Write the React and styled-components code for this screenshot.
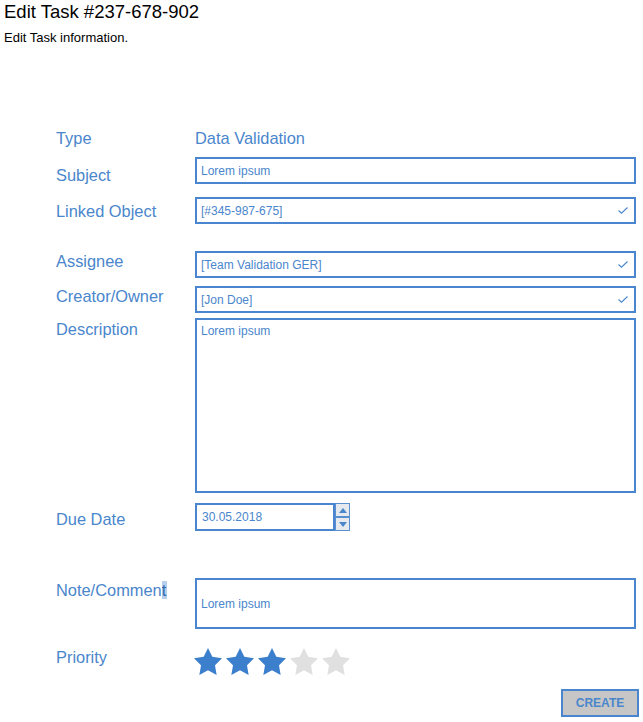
import React from 'react'
import styled, { createGlobalStyle } from 'styled-components'

const GlobalStyle = createGlobalStyle`
    body {
        margin: 0;
        background: #fff;
        font-family: "Liberation Sans", Arial, sans-serif;
    }
    * { box-sizing: border-box; }
`

const BLUE = '#4a86cc'

function Check() {
    return (
        <CheckMark width="10" height="7" viewBox="0 0 10 7">
            <polyline points="0.5,3.5 3.5,6.2 9.5,0.5" fill="none" stroke={BLUE} strokeWidth="1.1" />
        </CheckMark>
    )
}

function Star({ on }) {
    return (
        <svg width="28" height="27" viewBox="2 2 20 19.1" preserveAspectRatio="none">
            <polygon
                points="12,2 15.09,8.26 22,9.27 17,14.14 18.18,21.02 12,17.77 5.82,21.02 7,14.14 2,9.27 8.91,8.26"
                fill={on ? '#3b7fcd' : '#e0e0e0'}
            />
        </svg>
    )
}

function App() {
    const rating = 3

    return (
        <Page>
            <GlobalStyle />
            <Title>Edit Task #237-678-902</Title>
            <Subtitle>Edit Task information.</Subtitle>

            <Fields>
                <Row $gap={84}>
                    <Label>Type</Label>
                    <Value>Data Validation</Value>
                </Row>
                <Row $gap={10}>
                    <Label $offset={9}>Subject</Label>
                    <Input readOnly value="Lorem ipsum" />
                </Row>
                <Row $gap={13}>
                    <Label $offset={5}>Linked Object</Label>
                    <SelectBox>
                        <Input readOnly value="[#345-987-675]" />
                        <Check />
                    </SelectBox>
                </Row>
                <Row $gap={27}>
                    <Label $offset={1}>Assignee</Label>
                    <SelectBox>
                        <Input readOnly value="[Team Validation GER]" />
                        <Check />
                    </SelectBox>
                </Row>
                <Row $gap={8}>
                    <Label $offset={1}>Creator/Owner</Label>
                    <SelectBox>
                        <Input readOnly value="[Jon Doe]" />
                        <Check />
                    </SelectBox>
                </Row>
                <Row $gap={5}>
                    <Label $offset={2}>Description</Label>
                    <TextArea readOnly value="Lorem ipsum" />
                </Row>
                <Row $gap={10}>
                    <Label $offset={7}>Due Date</Label>
                    <DateBox>
                        <DateInput readOnly value="30.05.2018" />
                        <Spinner>
                            <SpinButton><Arrow $up /></SpinButton>
                            <SpinButton><Arrow /></SpinButton>
                        </Spinner>
                    </DateBox>
                </Row>
                <Row $gap={47}>
                    <Label $offset={3}>Note/Commen<Caret>t</Caret></Label>
                    <Input readOnly value="Lorem ipsum" $height={51} />
                </Row>
                <Row $gap={19}>
                    <Label>Priority</Label>
                    <Stars>
                        {[1, 2, 3, 4, 5].map(n => <Star key={n} on={n <= rating} />)}
                    </Stars>
                </Row>
            </Fields>

            <Footer>
                <CreateButton>CREATE</CreateButton>
            </Footer>
        </Page>
    )
}

export default App

const Page = styled.div`
    padding: 1px 4px 0 4px;
    width: 643px;
`

const Title = styled.h1`
    margin: 0;
    font-size: 18.5px;
    font-weight: normal;
    line-height: 22px;
    color: #000;
`

const Subtitle = styled.p`
    margin: 7px 0 0;
    font-size: 13px;
    line-height: 15px;
    color: #000;
`

const Fields = styled.div`
    padding: 0 3px 0 52px;
`

const Row = styled.div`
    display: grid;
    grid-template-columns: 139px 1fr;
    align-items: start;
    margin-top: ${props => props.$gap}px;
`

const Label = styled.div`
    padding-top: ${props => props.$offset || 0}px;
    font-size: 16.4px;
    line-height: 18px;
    color: ${BLUE};
    white-space: nowrap;
`

const Caret = styled.span`
    background: #b6cfec;
    color: #2e69ad;
    padding-right: 1px;
`

const Value = styled.div`
    font-size: 16.4px;
    line-height: 18px;
    color: ${BLUE};
`

const Input = styled.input`
    display: block;
    width: 100%;
    min-width: 0;
    height: ${props => props.$height || 27}px;
    margin: 0;
    padding: 0 4px;
    border: 2px solid #4a86cf;
    border-radius: 0;
    outline: none;
    background: #fff;
    font-family: "Liberation Sans", Arial, sans-serif;
    font-size: 12px;
    color: ${BLUE};
`

const SelectBox = styled.div`
    position: relative;

    ${Input} {
        padding-right: 24px;
    }
`

const CheckMark = styled.svg`
    position: absolute;
    right: 8px;
    top: 10px;
`

const TextArea = styled.textarea`
    display: block;
    width: 100%;
    height: 175px;
    margin: 0;
    padding: 4px 4px;
    border: 2px solid #4a86cf;
    border-radius: 0;
    outline: none;
    resize: none;
    background: #fff;
    font-family: "Liberation Sans", Arial, sans-serif;
    font-size: 12px;
    line-height: 14px;
    color: ${BLUE};
`

const DateBox = styled.div`
    display: flex;
    width: 155px;
    height: 28px;
`

const DateInput = styled(Input)`
    flex: 1 1 0;
    width: 0;
    height: 28px;
    padding-left: 5px;
`

const Spinner = styled.div`
    display: flex;
    flex: 0 0 15px;
    flex-direction: column;
`

const SpinButton = styled.div`
    flex: 1;
    display: flex;
    align-items: center;
    justify-content: center;
    background: #e6e9ee;
    border: 1.5px solid #5a90d0;
`

const Arrow = styled.span`
    width: 0;
    height: 0;
    border-left: 4px solid transparent;
    border-right: 4px solid transparent;
    ${props => props.$up
        ? `border-bottom: 5px solid ${BLUE};`
        : `border-top: 5px solid ${BLUE};`}
`

const Stars = styled.div`
    display: flex;
    gap: 4px;
    margin-left: -1px;
`

const Footer = styled.div`
    display: flex;
    justify-content: flex-end;
    margin-top: 14px;
`

const CreateButton = styled.button`
    width: 78px;
    height: 28px;
    padding: 0 0 1px;
    background: #c6c6c6;
    border: 2px solid #4a86cf;
    border-radius: 0;
    font-family: "Liberation Sans", Arial, sans-serif;
    font-size: 12px;
    font-weight: bold;
    line-height: 24px;
    color: ${BLUE};
    cursor: pointer;
`
